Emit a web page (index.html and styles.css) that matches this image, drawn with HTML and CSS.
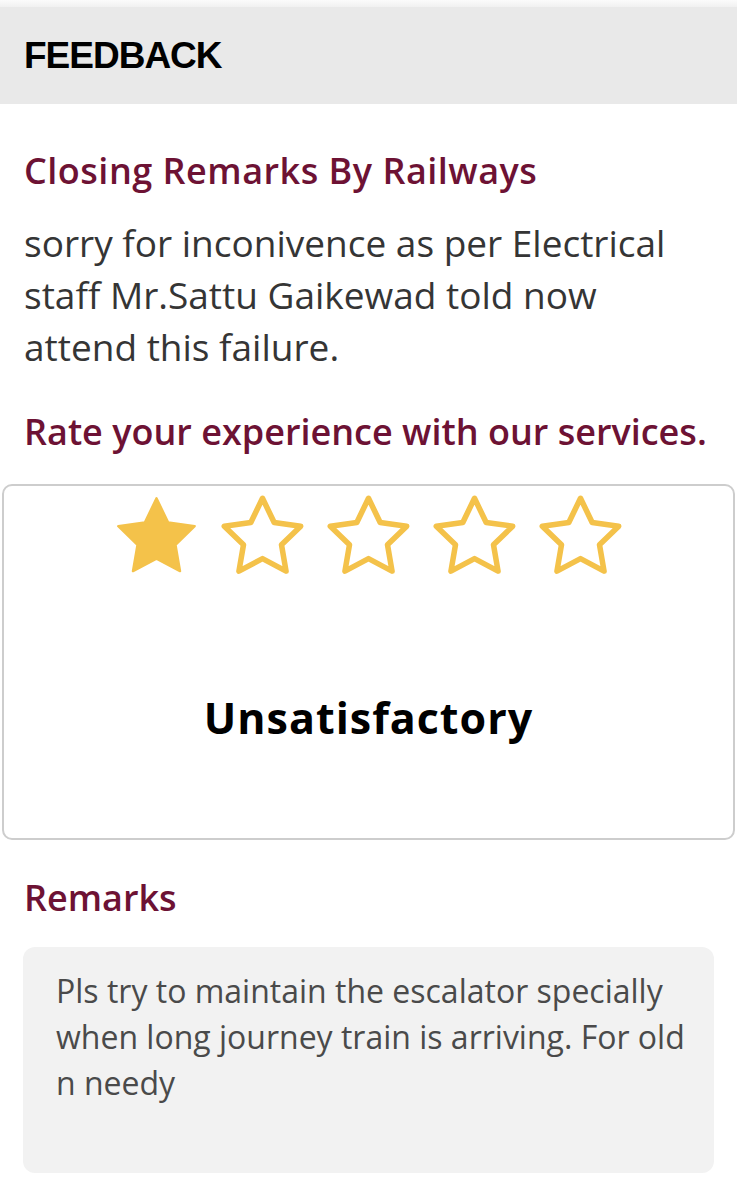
FILE: index.html
```html
<!DOCTYPE html>
<html lang="en">
<head>
    <meta charset="UTF-8">
    <meta name="viewport" content="width=device-width, initial-scale=1.0">
    <title>Feedback</title>
    <link rel="stylesheet" href="styles.css">
</head>
<body>
    <div class="top-strip"></div>
    <div class="page-header">
        <h1>FEEDBACK</h1>
    </div>

    <div class="content">
        <h2 class="section-title closing-title">Closing Remarks By Railways</h2>
        <p class="closing-text">sorry for inconivence as per Electrical staff Mr.Sattu Gaikewad told now attend this failure.</p>

        <h2 class="section-title rate-title">Rate your experience with our services.</h2>
    </div>

    <div class="rating-box">
        <div class="stars">
            <svg class="star" viewBox="0 0 24 24"><path class="filled" d="M12 2.6l2.95 6.1 6.7.95-4.85 4.7 1.15 6.650L12 17.85 6.05 21l1.15-6.65-4.85-4.7 6.7-.95z"/></svg>
            <svg class="star" viewBox="0 0 24 24"><path class="empty" d="M12 2.6l2.95 6.1 6.7.95-4.85 4.7 1.15 6.65L12 17.85 6.05 21l1.15-6.65-4.85-4.7 6.7-.95z"/></svg>
            <svg class="star" viewBox="0 0 24 24"><path class="empty" d="M12 2.6l2.95 6.1 6.7.95-4.85 4.7 1.15 6.65L12 17.85 6.05 21l1.15-6.65-4.85-4.7 6.7-.95z"/></svg>
            <svg class="star" viewBox="0 0 24 24"><path class="empty" d="M12 2.6l2.95 6.1 6.7.95-4.85 4.7 1.15 6.65L12 17.85 6.05 21l1.15-6.65-4.85-4.7 6.7-.95z"/></svg>
            <svg class="star" viewBox="0 0 24 24"><path class="empty" d="M12 2.6l2.95 6.1 6.7.95-4.85 4.7 1.15 6.65L12 17.85 6.05 21l1.15-6.65-4.85-4.7 6.7-.95z"/></svg>
        </div>
        <div class="rating-label">Unsatisfactory</div>
    </div>

    <div class="content">
        <h2 class="section-title remarks-title">Remarks</h2>
        <div class="remarks-box">
            <p>Pls try to maintain the escalator specially when long journey train is arriving. For old n needy</p>
        </div>
    </div>
</body>
</html>
```

FILE: styles.css
```css
body {
    font-family: 'Open Sans', sans-serif;
    background-color: #fff;
    margin: 0;
    padding: 0;
}
.top-strip {
    height: 7px;
    background: linear-gradient(#fbfbfb, #f1f1f1);
}
.page-header {
    background-color: #e9e9e9;
    height: 97px;
    display: flex;
    align-items: center;
    padding-left: 24px;
}
.page-header h1 {
    margin: 0;
    font-family: 'Liberation Sans', Arial, sans-serif;
    font-size: 37px;
    font-weight: bold;
    letter-spacing: -1px;
    color: #000;
}
.content {
    padding: 0 24px;
}
.section-title {
    margin: 45px 0 0;
    font-size: 36px;
    line-height: 44px;
    font-weight: 600;
    color: #6d1234;
}
.closing-title {
    letter-spacing: 0.5px;
}
.closing-text {
    margin: 24px 0 0;
    font-size: 37px;
    line-height: 52px;
    color: #353535;
}
.rate-title {
    margin-top: 37px;
}
.rating-box {
    margin: 30px 2px 0;
    height: 352px;
    border: 2px solid #cdcdcd;
    border-radius: 10px;
    display: flex;
    flex-direction: column;
    align-items: center;
}
.stars {
    display: flex;
    gap: 11px;
    margin-top: 2px;
}
.star {
    width: 95px;
    height: 95px;
}
.star path {
    stroke: #f4c24a;
    stroke-linejoin: round;
}
.star .filled {
    fill: #f4c24a;
    stroke-width: 0.6;
}
.star .empty {
    fill: none;
    stroke-width: 1.4;
}
.rating-label {
    margin-top: 110px;
    font-size: 43px;
    line-height: 50px;
    letter-spacing: 1px;
    font-weight: bold;
    color: #000;
}
.remarks-title {
    margin-top: 36px;
}
.remarks-box {
    margin: 27px -1px 0 -1px;
    background-color: #f2f2f2;
    border-radius: 12px;
    height: 226px;
    box-sizing: border-box;
    padding: 21px 14px 21px 33px;
}
.remarks-box p {
    margin: 0;
    font-size: 32px;
    line-height: 46px;
    color: #4a4a4a;
}
```
